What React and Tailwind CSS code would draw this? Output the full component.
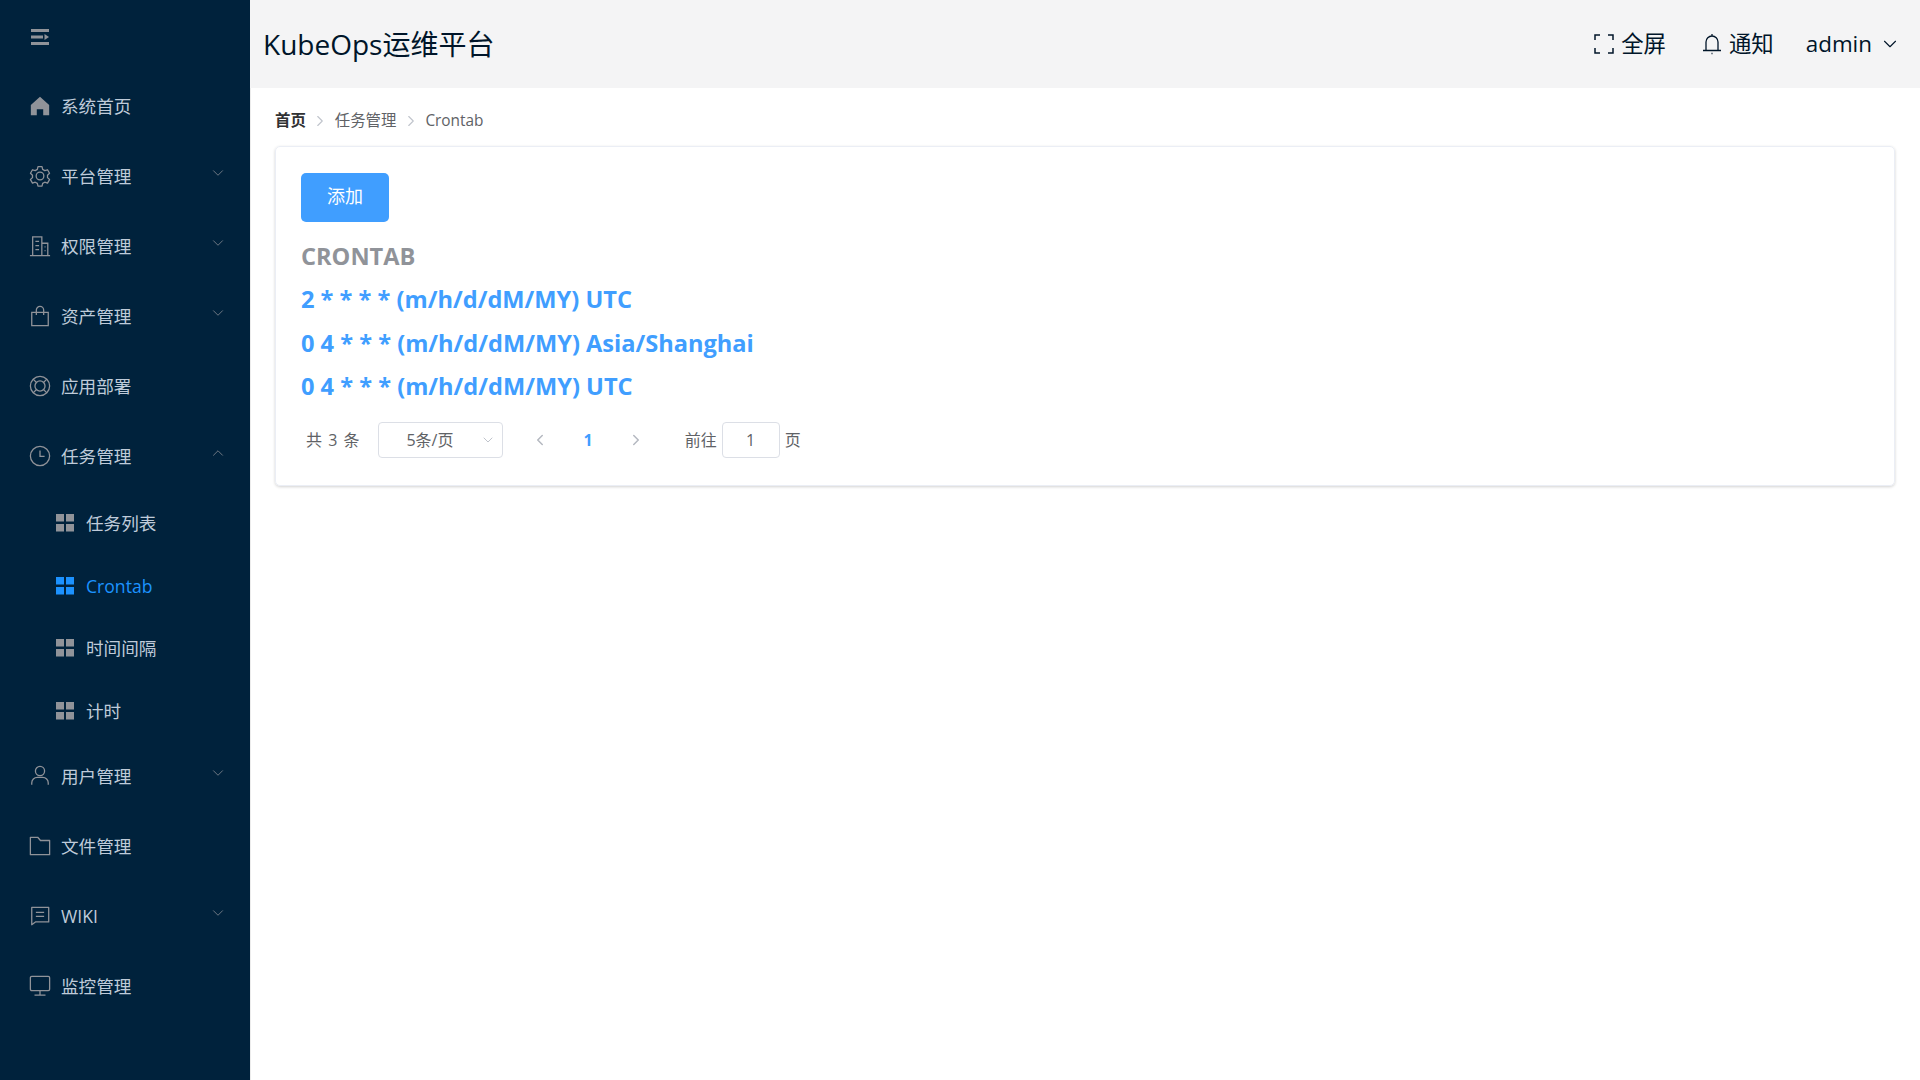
import { ChevronDown, ChevronUp, ChevronLeft, ChevronRight } from 'lucide-react'

const font = { fontFamily: '"Open Sans", "Noto Sans CJK SC", sans-serif' }

const Ico = ({ children, className = 'w-[22px] h-[22px]' }) => (
  <svg viewBox="0 0 24 24" fill="none" stroke="currentColor" strokeWidth="1.4" className={className}>{children}</svg>
)

const HomeIcon = () => (
  <svg viewBox="0 0 24 24" className="w-[22px] h-[22px]" fill="currentColor">
    <path d="M12 2 L22 11 V22 H15.5 V15.5 H8.5 V22 H2 V11 Z" />
  </svg>
)
const SettingIcon = () => (
  <Ico>
    <path d="M9.8 1.8h4.4l.7 3 2.3 1.3 3-.9 2.2 3.8-2.2 2.1v2.7l2.2 2.1-2.2 3.8-3-.9-2.3 1.3-.7 3H9.8l-.7-3-2.3-1.3-3 .9-2.2-3.8 2.2-2.1v-2.7L1.6 9l2.2-3.8 3 .9 2.3-1.3z" strokeLinejoin="round" />
    <circle cx="12" cy="12" r="4.2" />
  </Ico>
)
const BuildingIcon = () => (
  <Ico>
    <path d="M1 22.5h22M4 22.5V2h10v20.5M14 9h6.5v13.5M7 7h4M7 11.500h4M7 16h4M17 13h1M17 17h1" />
  </Ico>
)
const BagIcon = () => (
  <Ico>
    <path d="M3 8h18v14.500H3zM8 11V5.500a4 4 0 0 1 8 0V11" />
  </Ico>
)
const HelpIcon = () => (
  <Ico>
    <circle cx="12" cy="12" r="10.500" />
    <circle cx="12" cy="12" r="5.500" />
    <path d="M8.200 8.200 4.500 4.500M15.800 8.200l3.700-3.700M8.200 15.800l-3.700 3.700M15.800 15.800l3.700 3.700" />
  </Ico>
)
const ClockIcon = () => (
  <Ico>
    <circle cx="12" cy="12" r="10.500" />
    <path d="M12 6v6.500h5" />
  </Ico>
)
const GridIcon = () => (
  <svg viewBox="0 0 18 18" className="w-[18px] h-[18px]" fill="currentColor">
    <rect x="0" y="0" width="8" height="7.500" />
    <rect x="10" y="0" width="8" height="7.500" />
    <rect x="0" y="10" width="8" height="7.500" />
    <rect x="10" y="10" width="8" height="7.500" />
  </svg>
)
const UserIcon = () => (
  <Ico>
    <circle cx="12" cy="6.500" r="5" />
    <path d="M3 21.500v-2a6 6 0 0 1 6-6h6a6 6 0 0 1 6 6v2" />
  </Ico>
)
const FolderIcon = () => (
  <Ico>
    <path d="M1.500 2.500h8l3 3.500h10v15.500h-21z" strokeLinejoin="round" />
  </Ico>
)
const ChatIcon = () => (
  <Ico>
    <path d="M3 2.500h18.500v16H7l-4 3z" strokeLinejoin="round" />
    <path d="M7.500 8h9M7.500 12.500h9" />
  </Ico>
)
const MonitorIcon = () => (
  <Ico>
    <rect x="1.500" y="1.500" width="21" height="15.500" rx="1.500" />
    <path d="M12 17v5M6 22h12" />
  </Ico>
)

const menu = [
  { label: '系统首页', icon: HomeIcon },
  { label: '平台管理', icon: SettingIcon, arrow: 'down' },
  { label: '权限管理', icon: BuildingIcon, arrow: 'down' },
  { label: '资产管理', icon: BagIcon, arrow: 'down' },
  { label: '应用部署', icon: HelpIcon },
  {
    label: '任务管理', icon: ClockIcon, arrow: 'up',
    children: [
      { label: '任务列表' },
      { label: 'Crontab', active: true },
      { label: '时间间隔' },
      { label: '计时' },
    ],
  },
  { label: '用户管理', icon: UserIcon, arrow: 'down' },
  { label: '文件管理', icon: FolderIcon },
  { label: 'WIKI', icon: ChatIcon, arrow: 'down' },
  { label: '监控管理', icon: MonitorIcon },
]

const crons = [
  '2 * * * * (m/h/d/dM/MY) UTC',
  '0 4 * * * (m/h/d/dM/MY) Asia/Shanghai',
  '0 4 * * * (m/h/d/dM/MY) UTC',
]

function MenuItem({ item }) {
  const Icon = item.icon
  return (
    <>
      <div className="h-[70px] flex items-center pl-[29px] pr-[23px] text-[17.6px] text-[#bfcbd9]">
        <span className="w-[22px] flex justify-center text-[#909399] -translate-y-[1px]"><Icon /></span>
        <span className="ml-[10px] flex-1 -translate-y-[1px]">{item.label}</span>
        {item.arrow === 'down' && <ChevronDown size={18} strokeWidth={1} className="text-[#909399] -translate-y-[4px]" />}
        {item.arrow === 'up' && <ChevronUp size={18} strokeWidth={1} className="text-[#909399] -translate-y-[4px]" />}
      </div>
      {item.children && (
        <div>
          {item.children.map((c) => (
            <div key={c.label} className={`h-[62.600px] flex items-center pl-[56px] text-[17.6px] ${c.active ? 'text-[#1c92ff]' : 'text-[#bfcbd9]'}`}>
              <span className={c.active ? 'text-[#1c92ff]' : 'text-[#909399]'}><GridIcon /></span>
              <span className="ml-[12px]">{c.label}</span>
            </div>
          ))}
        </div>
      )}
    </>
  )
}

export default function App() {
  return (
    <div className="flex h-screen bg-white overflow-hidden" style={font}>
      <aside className="w-[250px] shrink-0 bg-[#00223c]">
        <div className="h-[72px] flex items-center pl-[31px] pt-[1px]">
          <svg viewBox="0 0 18 16" className="w-[18px] h-[16px] text-[#909399]" fill="currentColor">
            <rect x="0" y="0" width="18" height="3" />
            <rect x="0" y="6.500" width="12" height="3" />
            <path d="M13.500 5 L18 8 L13.500 11 Z" />
            <rect x="0" y="13" width="18" height="3" />
          </svg>
        </div>
        {menu.map((item) => <MenuItem key={item.label} item={item} />)}
      </aside>

      <div className="flex-1 min-w-0 flex flex-col">
        <header className="h-[88px] bg-[#f4f4f5] flex items-center pl-[13px] pr-[19px] text-[#001529]">
          <div className="text-[28px] flex-1">KubeOps运维平台</div>
          <div className="flex items-center text-[22.400px] gap-[32px]">
            <div className="flex items-center gap-[7px] mr-[4px]">
              <svg viewBox="0 0 20 20" className="w-[20px] h-[20px]" fill="none" stroke="currentColor" strokeWidth="1.500">
                <path d="M1 6V1h5M14 1h5v5M19 14v5h-5M6 19H1v-5" />
              </svg>
              全屏
            </div>
            <div className="flex items-center gap-[7px]">
              <svg viewBox="0 0 20 22" className="w-[20px] h-[22px]" fill="none" stroke="currentColor" strokeWidth="1.300">
                <path d="M1 17.500h18M4 17.500V9a6 6 0 0 1 12 0v8.500M10 1v2M9.500 20.500h1" />
              </svg>
              通知
            </div>
            <div className="flex items-center gap-[7px]">
              admin
              <ChevronDown size={22} strokeWidth={1.200} />
            </div>
          </div>
        </header>

        <main className="flex-1 border-l border-[#ececec] pt-[20px] pl-[24px] pr-[25px]">
          <nav className="flex items-center h-[26px] text-[15.400px] text-[#606266]">
            <span className="font-bold text-[#303133]">首页</span>
            <ChevronRight size={18} strokeWidth={1.500} className="mx-[5.500px] text-[#c0c4cc]" />
            <span>任务管理</span>
            <ChevronRight size={18} strokeWidth={1.500} className="mx-[5.500px] text-[#c0c4cc]" />
            <span>Crontab</span>
          </nav>

          <section className="mt-[12px] h-[340px] rounded-[5px] border border-[#ebeef5] shadow-[0_1px_3px_rgba(0,0,0,0.18)] pt-[26px] pl-[25px]">
            <button className="w-[88px] h-[49px] rounded-[5px] bg-[#409eff] text-white text-[18px] pb-[2px]">添加</button>
            <h2 className="mt-[16px] text-[23.600px] leading-[36px] font-bold text-[#909399]">CRONTAB</h2>
            <div className="mt-[7px] flex flex-col gap-[7.500px]">
              {crons.map((c) => (
                <div key={c} className="text-[23.600px] leading-[36px] font-bold text-[#409eff]">{c}</div>
              ))}
            </div>
            <div className="mt-[18px] flex items-center text-[16px] text-[#606266] pl-[5px]">
              <span className="[word-spacing:2px]">共 3 条</span>
              <div className="ml-[19px] w-[125px] h-[36px] rounded-[4px] border border-[#dcdfe6] flex items-center pl-[27px] pr-[6px]">
                <span className="flex-1">5条/页</span>
                <ChevronDown size={16} strokeWidth={1.500} className="text-[#c0c4cc]" />
              </div>
              <ChevronLeft size={18} strokeWidth={2} className="ml-[28px] text-[#b4b8c0]" />
              <span className="ml-[34px] font-bold text-[#409eff]">1</span>
              <ChevronRight size={18} strokeWidth={2} className="ml-[34px] text-[#b4b8c0]" />
              <span className="ml-[40px]">前往</span>
              <div className="ml-[5px] w-[58px] h-[36px] rounded-[4px] border border-[#dcdfe6] flex items-center justify-center">1</div>
              <span className="ml-[5px]">页</span>
            </div>
          </section>
        </main>
      </div>
    </div>
  )
}
